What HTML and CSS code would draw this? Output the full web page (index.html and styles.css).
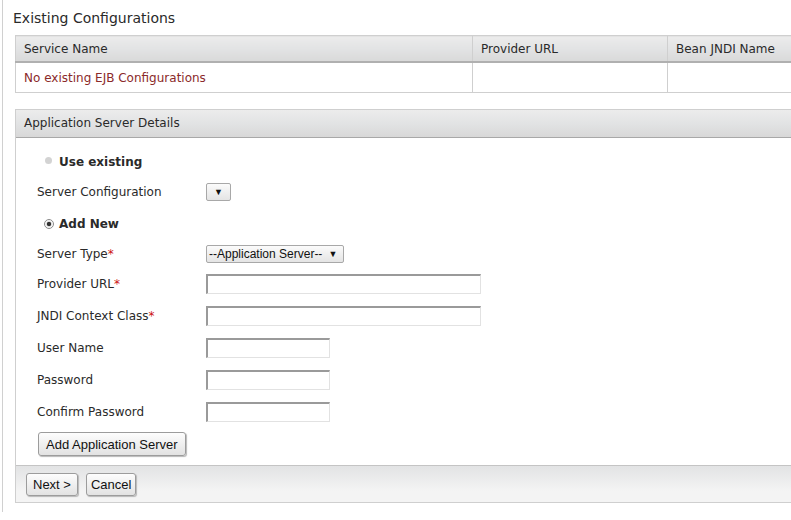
FILE: index.html
```html
<!DOCTYPE html>
<html>
<head>
<meta charset="utf-8">
<link rel="stylesheet" href="styles.css">
</head>
<body>
<div class="page">
  <h2 class="title">Existing Configurations</h2>
  <table class="grid">
    <thead>
      <tr><th class="c1">Service Name</th><th class="c2">Provider URL</th><th class="c3">Bean JNDI Name</th></tr>
    </thead>
    <tbody>
      <tr><td class="empty">No existing EJB Configurations</td><td></td><td></td></tr>
    </tbody>
  </table>

  <div class="panel">
    <div class="panel-head">Application Server Details</div>
    <div class="panel-body">
      <div class="form">
        <div class="radio-row r1"><span class="radio disabled"></span><b>Use existing</b></div>
        <div class="label r2">Server Configuration</div>
        <div class="field r2"><span class="select empty-sel"><span class="arrow">▼</span></span></div>
        <div class="radio-row r3"><span class="radio checked"></span><b>Add New</b></div>
        <div class="label">Server Type<span class="req">*</span></div>
        <div class="field"><span class="select">--Application Server--<span class="arrow">▼</span></span></div>
        <div class="label">Provider URL<span class="req">*</span></div>
        <div class="field"><span class="input wide"></span></div>
        <div class="label">JNDI Context Class<span class="req">*</span></div>
        <div class="field"><span class="input wide"></span></div>
        <div class="label">User Name</div>
        <div class="field"><span class="input"></span></div>
        <div class="label">Password</div>
        <div class="field"><span class="input"></span></div>
        <div class="label">Confirm Password</div>
        <div class="field"><span class="input"></span></div>
      </div>
      <div class="add-row"><button class="btn add-btn">Add Application Server</button></div>
    </div>
    <div class="panel-foot">
      <button class="btn next-btn">Next &gt;</button>
      <button class="btn cancel-btn">Cancel</button>
    </div>
  </div>
</div>
</body>
</html>
```
FILE: styles.css
```css
html, body {
  margin: 0;
  padding: 0;
  overflow: hidden;
  background: #fff;
}
body {
  font-family: "DejaVu Sans", Verdana, sans-serif;
  font-size: 12px;
  color: #2a2a2a;
}
.page {
  margin-left: 2px;
  border-left: 1px solid #d0d0d0;
  height: 512px;
  width: 820px;
  padding-left: 12px;
}
.title {
  margin: 0 0 0 -2px;
  padding: 8px 0 0 0;
  font-size: 14px;
  font-weight: normal;
  height: 27px;
  line-height: 20px;
  color: #2a2a2a;
}
.grid {
  border-collapse: collapse;
  width: 800px;
  table-layout: fixed;
}
.grid th, .grid td {
  border: 1px solid #cfcfcf;
  text-align: left;
  padding: 0 0 0 8px;
  font-weight: normal;
}
.grid th {
  height: 25px;
  background: linear-gradient(#ececec, #e2e3e4 50%, #d9d9d9);
  border-bottom: 2px solid #b0b0b0;
  color: #2a2a2a;
}
.grid td {
  height: 29px;
}
.grid .c1 { width: 448px; }
.grid .c2 { width: 186px; }
.empty { color: #8b2a2a; }

.panel {
  margin-top: 16px;
  width: 800px;
  border: 1px solid #cfcfcf;
  border-right: none;
}
.panel-head {
  height: 27px;
  line-height: 27px;
  padding-left: 8px;
  background: linear-gradient(#ececec, #e2e3e4 50%, #d8d8d8);
  border-bottom: 1px solid #a8a8a8;
}
.panel-body {
  padding: 11px 0 9px 21px;
}
.form {
  display: grid;
  grid-template-columns: 169px auto;
  grid-template-rows: 26px 34px 30px 29px 32px 32px 32px 32px 31px;
  align-items: center;
}
.radio-row {
  grid-column: 1 / 3;
  display: flex;
  align-items: center;
  padding-left: 7px;
}
.radio-row b { font-weight: bold; margin-left: 6px; }
.radio {
  display: inline-block;
  width: 7px;
  height: 7px;
  border-radius: 50%;
  box-sizing: border-box;
}
.radio.disabled {
  background: #d3d3d3;
  margin-top: -4px;
  margin-left: 1px;
  margin-right: 1px;
}
.radio.checked {
  width: 10px;
  height: 10px;
  border: 1px solid #8a8a8a;
  background: radial-gradient(circle, #333 0, #333 1.8px, #e8e8e8 2.6px, #fff 4px);
  margin-right: -1px;
}
.req { color: #cc1111; }
.select {
  display: inline-flex;
  align-items: center;
  box-sizing: border-box;
  height: 18px;
  padding: 0 6px 0 2px;
  border: 1px solid #a8a8a8;
  border-radius: 2px;
  background: linear-gradient(#fbfbfb, #e4e4e4);
  font-family: "Liberation Sans", Arial, sans-serif;
  font-size: 12px;
  color: #111;
  vertical-align: middle;
}
.select .arrow {
  font-size: 9px;
  margin-left: 6px;
}
.select.empty-sel { width: 25px; justify-content: center; padding: 0; }
.select.empty-sel .arrow { margin-left: 0; }
.input {
  display: block;
  box-sizing: border-box;
  width: 124px;
  height: 20px;
  border: 1px solid #e2e2e2;
  border-top: 2px solid #9a9a9a;
  border-left: 2px solid #9a9a9a;
  background: #fff;
}
.input.wide { width: 275px; }
.add-row {
  padding: 5px 0 0 1px;
}
.btn {
  font-family: "Liberation Sans", Arial, sans-serif;
  font-size: 13px;
  color: #111;
  height: 24px;
  padding: 0 7px;
  border: 1px solid #9c9c9c;
  border-radius: 3px;
  background: linear-gradient(#fdfdfd, #e2e2e2);
  box-shadow: 1px 1px 1px #b8b8b8;
  margin: 0;
}
.panel-foot {
  height: 36px;
  border-top: 1px solid #c4c4c4;
  background: linear-gradient(#e2e3e4, #f4f4f4 70%, #f4f4f4);
  display: flex;
  align-items: center;
  gap: 8px;
  padding-left: 10px;
}
.panel-foot .btn { height: 23px; }
.next-btn { padding: 0 6px; }
.cancel-btn { padding: 0 4px; }
```
